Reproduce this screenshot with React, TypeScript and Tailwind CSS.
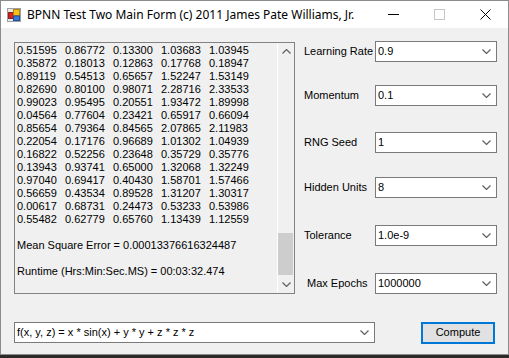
import React from "react";

const rows = [
  ["0.51595", "0.86772", "0.13300", "1.03683", "1.03945"],
  ["0.35872", "0.18013", "0.12863", "0.17768", "0.18947"],
  ["0.89119", "0.54513", "0.65657", "1.52247", "1.53149"],
  ["0.82690", "0.80100", "0.98071", "2.28716", "2.33533"],
  ["0.99023", "0.95495", "0.20551", "1.93472", "1.89998"],
  ["0.04564", "0.77604", "0.23421", "0.65917", "0.66094"],
  ["0.85654", "0.79364", "0.84565", "2.07865", "2.11983"],
  ["0.22054", "0.17176", "0.96689", "1.01302", "1.04939"],
  ["0.16822", "0.52256", "0.23648", "0.35729", "0.35776"],
  ["0.13943", "0.93741", "0.65000", "1.32068", "1.32249"],
  ["0.97040", "0.69417", "0.40430", "1.58701", "1.57466"],
  ["0.56659", "0.43534", "0.89528", "1.31207", "1.30317"],
  ["0.00617", "0.68731", "0.24473", "0.53233", "0.53986"],
  ["0.55482", "0.62779", "0.65760", "1.13439", "1.12559"],
];

const font = { fontFamily: '"Liberation Sans", Arial, sans-serif' };

function Chevron({ up = false }: { up?: boolean }) {
  return (
    <svg width="9" height="5" viewBox="0 0 9 5" className="block">
      <path
        d={up ? "M0.5 4.5 L4.5 0.5 L8.5 4.5" : "M0.5 0.5 L4.5 4.5 L8.5 0.5"}
        fill="none"
        stroke="#606060"
        strokeWidth="1.2"
      />
    </svg>
  );
}

function Combo({ value, className }: { value: string; className: string }) {
  return (
    <div
      className={`flex items-center h-[21px] bg-white border border-[#7a7a7a] pl-[2px] pr-[5px] ${className}`}
    >
      <span className="flex-1 text-[11px] leading-[13px] text-black whitespace-nowrap">{value}</span>
      <Chevron />
    </div>
  );
}

function Row({ label, value, mt, pl = "pl-0" }: { label: string; value: string; mt: string; pl?: string }) {
  return (
    <div className={`flex items-center ${mt}`}>
      <span className={`w-[71px] text-[11px] leading-[13px] text-black whitespace-nowrap ${pl}`}>{label}</span>
      <Combo value={value} className="w-[122px]" />
    </div>
  );
}

export default function App() {
  return (
    <div className="w-[509px] h-[358px] bg-[#2e2a27] flex flex-col" style={font}>
      <div className="w-[509px] h-[355px] border border-[#8c8c8c] flex flex-col bg-[#f0f0f0]">
        {/* Title bar */}
        <div className="h-[27px] bg-white flex items-center">
          <div className="ml-[6px] w-[14px] h-[14px]">
            <svg width="14" height="14" viewBox="0 0 14 14">
              <rect x="0.5" y="0.5" width="13" height="13" fill="#e8e8e8" stroke="#a0a0a0" />
              <rect x="1.5" y="4.5" width="5" height="6" fill="#d82020" stroke="#902020" />
              <rect x="6.5" y="1.5" width="6" height="6" fill="#f5c21b" stroke="#b08010" />
              <rect x="6.5" y="8" width="6" height="4.5" fill="#3a7ad8" stroke="#20509a" />
            </svg>
          </div>
          <span
            className="ml-[6px] text-[12px] text-black whitespace-nowrap"
            style={{ fontFamily: '"Noto Sans", "Open Sans", sans-serif' }}
          >
            BPNN Test Two Main Form (c) 2011 James Pate Williams, Jr.
          </span>
          <div className="flex-1" />
          <div className="w-[46px] h-[27px] flex items-center justify-center">
            <div className="w-[11px] h-px bg-black" />
          </div>
          <div className="w-[46px] h-[27px] flex items-center justify-center">
            <div className="w-[11px] h-[11px] border border-[#c6c6c6]" />
          </div>
          <div className="w-[46px] h-[27px] flex items-center justify-center">
            <svg width="11" height="11" viewBox="0 0 11 11">
              <path d="M0.5 0.5 L10.5 10.5 M10.5 0.5 L0.5 10.5" stroke="#000" strokeWidth="1" />
            </svg>
          </div>
        </div>

        {/* Client */}
        <div className="flex-1 flex flex-col pl-[13px] pt-[14px]">
          <div className="flex">
            {/* Text box */}
            <div className="w-[281px] h-[252px] border border-[#828282] flex">
              <div className="flex-1 pl-[2px] pt-[1px] text-[11px] leading-[13px] text-black">
                {rows.map((r, i) => (
                  <div key={i} className="grid grid-cols-[48px_48px_48px_48px_48px]">
                    {r.map((v, j) => (
                      <span key={j}>{v}</span>
                    ))}
                  </div>
                ))}
                <div className="h-[13px]" />
                <div>Mean Square Error = 0.00013376616324487</div>
                <div className="h-[13px]" />
                <div>Runtime (Hrs:Min:Sec.MS) = 00:03:32.474</div>
              </div>
              <div className="w-[17px] border-l border-white flex flex-col items-center bg-[#f0f0f0]">
                <div className="h-[17px] w-full flex items-center justify-center">
                  <Chevron up />
                </div>
                <div className="flex-1 w-full flex flex-col justify-end">
                  <div className="h-[42px] w-[15px] bg-[#cdcdcd] mb-[1px]" />
                </div>
                <div className="h-[17px] w-full flex items-center justify-center">
                  <Chevron />
                </div>
              </div>
            </div>

            {/* Right column */}
            <div className="ml-[9px] -mt-px flex flex-col">
              <Row label="Learning Rate" value="0.9" mt="mt-0" />
              <Row label="Momentum" value="0.1" mt="mt-[23px]" />
              <Row label="RNG Seed" value="1" mt="mt-[26px]" />
              <Row label="Hidden Units" value="8" mt="mt-[24px]" />
              <Row label="Tolerance" value="1.0e-9" mt="mt-[27px]" />
              <Row label="Max Epochs" value="1000000" mt="mt-[27px]" pl="pl-[3px]" />
            </div>
          </div>

          {/* Bottom row */}
          <div className="flex items-center mt-[27px] h-[23px]">
            <Combo value="f(x, y, z) = x * sin(x) + y * y + z * z * z" className="w-[361px]" />
            <button className="ml-[46px] w-[74px] h-[22px] border-2 border-[#0078d7] bg-[#e1e1e1] text-[11px] leading-[13px] text-black flex items-center justify-center">
              Compute
            </button>
          </div>
        </div>
      </div>
    </div>
  );
}
